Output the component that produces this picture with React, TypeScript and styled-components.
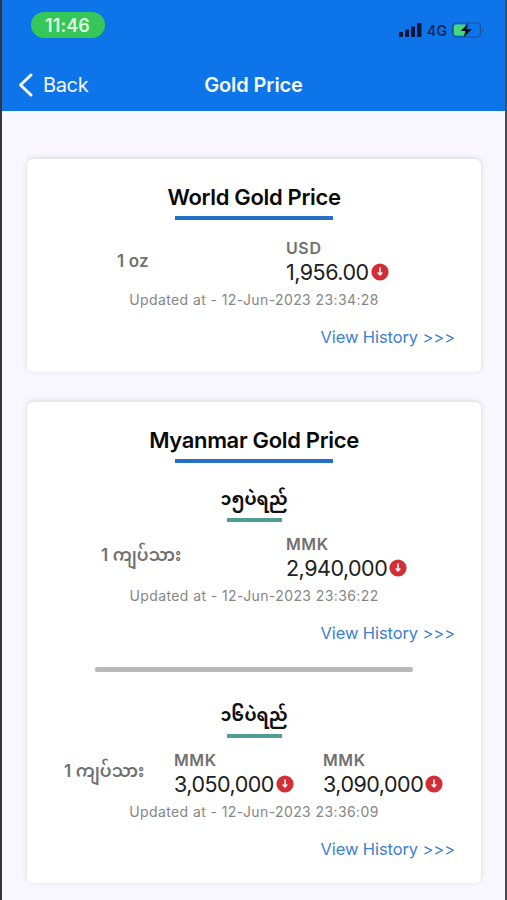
import React from "react";
import styled, { createGlobalStyle } from "styled-components";

const GlobalStyle = createGlobalStyle`
  * { box-sizing: border-box; }
  body {
    margin: 0;
    background: #f7f7fd;
    font-family: Inter, "Noto Sans Myanmar", "Noto Sans", sans-serif;
  }
`;

const Screen = styled.div`
  width: 507px;
  height: 900px;
  overflow: hidden;
  background: #f7f7fd;
  border-left: 2px solid #34343a;
  border-right: 2px solid #4a4a55;
`;

const Header = styled.header`
  height: 111px;
  background: #0d74e9;
`;

const StatusBar = styled.div`
  display: flex;
  justify-content: space-between;
  height: 58px;
  padding: 12px 21px 0 28.5px;
`;

const Clock = styled.div`
  width: 74px;
  height: 26px;
  border-radius: 13px;
  background: #35c759;
  color: #e0fadf;
  font-size: 18px;
  font-weight: 600;
  line-height: 27px;
  text-align: center;
  letter-spacing: 0.1px;
`;

const Indicators = styled.div`
  display: flex;
  align-items: center;
  height: 36px;
  color: #06204b;
`;

const Network = styled.span`
  width: 28px;
  padding-left: 5px;
  font-size: 14px;
  font-weight: 500;
  letter-spacing: 0.2px;
`;

const NavBar = styled.nav`
  display: grid;
  grid-template-columns: 1fr auto 1fr;
  align-items: center;
  height: 53px;
  padding: 0 15px;
  color: #f4faff;
`;

const Back = styled.a`
  display: flex;
  align-items: center;
  gap: 8px;
  font-size: 20px;
  letter-spacing: -0.35px;
`;

const NavTitle = styled.h1`
  margin: 0;
  font-size: 20px;
  font-weight: 600;
  letter-spacing: -0.1px;
`;

const Cards = styled.main`
  display: flex;
  flex-direction: column;
  gap: 30px;
  padding: 48px 24px 0 25px;
`;

const Card = styled.section<{ $height: number }>`
  height: ${(p) => p.$height}px;
  padding-top: 23px;
  border-radius: 6px;
  background: #fff;
  box-shadow: 0 -1px 5px rgba(30, 30, 60, 0.15);
`;

const CardTitle = styled.h2`
  display: flex;
  flex-direction: column;
  align-items: center;
  margin: 0;
  font-size: 22px;
  font-weight: 600;
  line-height: 30px;
  letter-spacing: -0.33px;
  color: #090909;

  &::after {
    content: "";
    width: 158px;
    height: 4px;
    margin-top: 4px;
    background: #2470c8;
  }
`;

const Grade = styled.h3`
  display: flex;
  flex-direction: column;
  align-items: center;
  height: 42px;
  margin: 0;
  font-size: 17.3px;
  font-weight: 700;
  line-height: 38px;
  white-space: nowrap;
  color: #111;

  &::after {
    content: "";
    flex: none;
    width: 55px;
    height: 4px;
    background: #4e9e96;
  }
`;

const Entry = styled.div<{ $top: number }>`
  padding-top: ${(p) => p.$top}px;
`;

const PriceRow = styled.div<{ $columns: string }>`
  display: grid;
  grid-template-columns: ${(p) => p.$columns};
  height: 47px;
`;

const Unit = styled.div<{ $indent: number; $line: number }>`
  padding-left: ${(p) => p.$indent}px;
  font-size: 17px;
  font-weight: 600;
  line-height: ${(p) => p.$line}px;
  letter-spacing: 0.15px;
  white-space: nowrap;
  color: #707070;
`;

const Currency = styled.div`
  font-size: 16px;
  font-weight: 600;
  line-height: 22px;
  letter-spacing: 0.6px;
  color: #707070;
`;

const Amount = styled.div`
  display: flex;
  align-items: center;
  gap: 2px;
  height: 25px;
  font-size: 21.5px;
  letter-spacing: -0.5px;
  color: #202020;
`;

const Updated = styled.p`
  margin: 6px 0 0;
  font-size: 14px;
  line-height: 20px;
  letter-spacing: 0.4px;
  text-align: center;
  color: #868686;
`;

const History = styled.a`
  display: block;
  padding: 15px 26px 0 0;
  font-size: 16.5px;
  line-height: 24px;
  letter-spacing: -0.1px;
  text-align: right;
  color: #3e7fca;
`;

const Divider = styled.hr`
  width: 318px;
  height: 5px;
  margin: 22px auto 0 68px;
  border: 0;
  border-radius: 2px;
  background: #b9b9b9;
`;

const SignalIcon = () => (
  <svg width="23" height="14" viewBox="0 0 23 14" fill="#04163b">
    <rect x="0" y="9" width="4" height="5" rx="1" />
    <rect x="6" y="6.5" width="4" height="7.5" rx="1" />
    <rect x="12" y="3.5" width="4" height="10.5" rx="1" />
    <rect x="18" y="0" width="4.5" height="14" rx="1" />
  </svg>
);

const BatteryIcon = () => (
  <svg width="34" height="18" viewBox="0 0 34 18">
    <rect x="2.5" y="2" width="28" height="14" rx="4" fill="none" stroke="#18539e" strokeWidth="1.2" />
    <path d="M6 3.5h9v11H6a2 2 0 0 1-2-2v-7a2 2 0 0 1 2-2z" fill="#45d982" />
    <path d="M18.5 2 10.5 10h5l-2 6.5 8.5-8.5h-5.2z" fill="#041425" />
    <path d="M32 7v4c1.8-.7 1.8-3.300 0-4z" fill="#18539e" />
  </svg>
);

const BackIcon = () => (
  <svg width="18" height="26" viewBox="0 0 18 26" fill="none" stroke="currentColor" strokeWidth="3" strokeLinecap="round" strokeLinejoin="round">
    <path d="M14 3 3.500 13 14 23" />
  </svg>
);

const DownIcon = () => (
  <svg width="18" height="18" viewBox="0 0 18 18">
    <circle cx="9" cy="9" r="8.600" fill="#d12f35" />
    <path d="M9 4.500v7M6.700 9.500 9 11.900l2.300-2.400" fill="none" stroke="#fff" strokeWidth="1.500" />
  </svg>
);

type EntryProps = {
  top: number;
  unit: string;
  indent: number;
  line: number;
  columns: string;
  currency: string;
  amounts: string[];
  updated: string;
};

const PriceEntry = ({ top, unit, indent, line, columns, currency, amounts, updated }: EntryProps) => (
  <Entry $top={top}>
    <PriceRow $columns={columns}>
      <Unit $indent={indent} $line={line}>{unit}</Unit>
      {amounts.map((amount) => (
        <div key={amount}>
          <Currency>{currency}</Currency>
          <Amount>
            <span>{amount}</span>
            <DownIcon />
          </Amount>
        </div>
      ))}
    </PriceRow>
    <Updated>Updated at - {updated}</Updated>
    <History>View History &gt;&gt;&gt;</History>
  </Entry>
);

const GradeBlock = styled.div<{ $top: number }>`
  padding-top: ${(p) => p.$top}px;
`;

export default function App() {
  return (
    <>
      <GlobalStyle />
      <Screen>
        <Header>
          <StatusBar>
            <Clock>11:46</Clock>
            <Indicators>
              <SignalIcon />
              <Network>4G</Network>
              <BatteryIcon />
            </Indicators>
          </StatusBar>
          <NavBar>
            <Back>
              <BackIcon />
              <span>Back</span>
            </Back>
            <NavTitle>Gold Price</NavTitle>
          </NavBar>
        </Header>
        <Cards>
          <Card $height={213}>
            <CardTitle>World Gold Price</CardTitle>
            <PriceEntry
              top={17}
              unit="1 oz"
              indent={90}
              line={49}
              columns="259px 1fr"
              currency="USD"
              amounts={["1,956.00"]}
              updated="12-Jun-2023 23:34:28"
            />
          </Card>
          <Card $height={481}>
            <CardTitle>Myanmar Gold Price</CardTitle>
            <GradeBlock $top={17}>
              <Grade>၁၅ပဲရည်</Grade>
              <PriceEntry
                top={11}
                unit="1 ကျပ်သား"
                indent={74}
                line={44}
                columns="259px 1fr"
                currency="MMK"
                amounts={["2,940,000"]}
                updated="12-Jun-2023 23:36:22"
              />
            </GradeBlock>
            <Divider />
            <GradeBlock $top={24}>
              <Grade>၁၆ပဲရည်</Grade>
              <PriceEntry
                top={11}
                unit="1 ကျပ်သား"
                indent={37}
                line={44}
                columns="147px 149px 1fr"
                currency="MMK"
                amounts={["3,050,000", "3,090,000"]}
                updated="12-Jun-2023 23:36:09"
              />
            </GradeBlock>
          </Card>
        </Cards>
      </Screen>
    </>
  );
}
